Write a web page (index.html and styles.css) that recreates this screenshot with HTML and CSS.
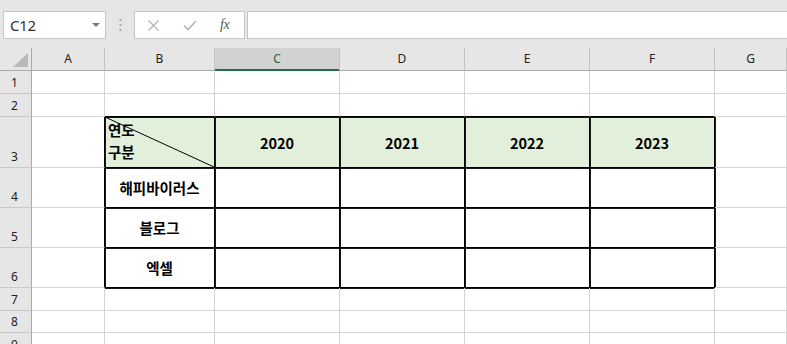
FILE: index.html
```html
<!DOCTYPE html>
<html lang="ko">
<head>
<meta charset="utf-8">
<title>Excel</title>
<link rel="stylesheet" href="styles.css">
</head>
<body>
<div class="toolbar">
  <div class="namebox"><span>C12</span><svg class="caret" width="8" height="4" viewBox="0 0 8 4"><polygon points="0,0 8,0 4,4" fill="#7a7a7a"/></svg></div>
  <div class="grip"><svg width="3" height="12" viewBox="0 0 3 12"><rect x="0.5" y="0" width="2" height="2" fill="#a9a9a9"/><rect x="0.5" y="5" width="2" height="2" fill="#a9a9a9"/><rect x="0.5" y="10" width="2" height="2" fill="#a9a9a9"/></svg></div>
  <div class="fbtns">
    <svg class="ico-x" width="11" height="11" viewBox="0 0 11 11"><path d="M0.5 0.5 L10.5 10.5 M10.5 0.5 L0.5 10.5" stroke="#b3b3b3" stroke-width="1.3" fill="none"/></svg>
    <svg class="ico-ok" width="14" height="11" viewBox="0 0 14 11"><path d="M1 5.5 L5 9.5 L13 1" stroke="#b3b3b3" stroke-width="1.6" fill="none"/></svg>
    <span class="fx">fx</span>
  </div>
  <div class="fbar"></div>
</div>
<div class="sheet">
  <div class="hd corner"><svg width="15" height="14" viewBox="0 0 15 14"><polygon points="0,14 15,14 15,0" fill="#b9b9b9"/></svg></div>
  <div class="hd">A</div><div class="hd">B</div><div class="hd sel">C</div><div class="hd">D</div><div class="hd">E</div><div class="hd">F</div><div class="hd">G</div>

  <div class="rh">1</div><div class="c"></div><div class="c"></div><div class="c"></div><div class="c"></div><div class="c"></div><div class="c"></div><div class="c"></div>

  <div class="rh">2</div><div class="c"></div><div class="c bb"></div><div class="c bb"></div><div class="c bb"></div><div class="c bb"></div><div class="c bb"></div><div class="c"></div>

  <div class="rh">3</div><div class="c br"></div>
  <div class="c bx green corner-cell"><svg class="diag" viewBox="0 0 100 100" preserveAspectRatio="none"><line x1="0" y1="0" x2="100" y2="100" stroke="#000" stroke-width="1" vector-effect="non-scaling-stroke"/></svg><span>연도</span><span>구분</span></div>
  <div class="c bx green k">2020</div><div class="c bx green k">2021</div><div class="c bx green k">2022</div><div class="c bx green k">2023</div><div class="c il"></div>

  <div class="rh">4</div><div class="c br"></div><div class="c bx k">해피바이러스</div><div class="c bx"></div><div class="c bx"></div><div class="c bx"></div><div class="c bx"></div><div class="c il"></div>

  <div class="rh">5</div><div class="c br"></div><div class="c bx k">블로그</div><div class="c bx"></div><div class="c bx"></div><div class="c bx"></div><div class="c bx"></div><div class="c il"></div>

  <div class="rh">6</div><div class="c br"></div><div class="c bx k">엑셀</div><div class="c bx"></div><div class="c bx"></div><div class="c bx"></div><div class="c bx"></div><div class="c il"></div>

  <div class="rh">7</div><div class="c"></div><div class="c it"></div><div class="c it"></div><div class="c it"></div><div class="c it"></div><div class="c it"></div><div class="c"></div>

  <div class="rh">8</div><div class="c"></div><div class="c"></div><div class="c"></div><div class="c"></div><div class="c"></div><div class="c"></div><div class="c"></div>

  <div class="rh">9</div><div class="c"></div><div class="c"></div><div class="c"></div><div class="c"></div><div class="c"></div><div class="c"></div><div class="c"></div>
</div>
</body>
</html>
```

FILE: styles.css
```css
html, body {
  margin: 0;
  padding: 0;
}
body {
  width: 787px;
  height: 344px;
  overflow: hidden;
  background: #fff;
  font-family: "Noto Sans", "Liberation Sans", sans-serif;
}

/* ---------- formula toolbar ---------- */
.toolbar {
  display: flex;
  align-items: flex-start;
  height: 48px;
  box-sizing: border-box;
  padding: 11px 0 0 3px;
  background: #e6e6e6;
  overflow: hidden;
}
.namebox {
  width: 103px;
  height: 28px;
  box-sizing: border-box;
  border: 1px solid #c6c6c6;
  background: #fff;
  display: flex;
  align-items: center;
  justify-content: space-between;
  padding: 0 5px 0 6px;
  font-size: 15px;
  color: #333;
}
.namebox span {
  letter-spacing: -0.3px;
}
.grip {
  width: 28px;
  height: 28px;
  display: flex;
  align-items: center;
  justify-content: center;
}
.fbtns {
  width: 111px;
  height: 28px;
  box-sizing: border-box;
  border: 1px solid #c6c6c6;
  background: #fff;
  display: flex;
  align-items: center;
  padding-left: 13px;
}
.ico-x {
  margin-right: 24px;
}
.ico-ok {
  margin-right: 23px;
}
.fx {
  font-family: "Liberation Serif", serif;
  font-style: italic;
  font-size: 14px;
  color: #555;
  letter-spacing: -0.5px;
}
.fbar {
  flex: 1;
  height: 28px;
  box-sizing: border-box;
  margin-left: 2px;
  margin-right: -4px;
  border: 1px solid #c6c6c6;
  background: #fff;
}

/* ---------- sheet grid ---------- */
.sheet {
  display: grid;
  grid-template-columns: 32px 73px 110px 125px 125px 125px 125px 72px;
  grid-template-rows: 23px 23px 23px 51px 40px 40px 40px 23px 22px 23px;
}
.sheet > div {
  box-sizing: border-box;
  position: relative;
}
.hd {
  background: #e6e6e6;
  border-right: 1px solid #c3c3c3;
  border-bottom: 1px solid #a9a9a9;
  display: flex;
  align-items: center;
  justify-content: center;
  font-size: 12px;
  color: #222;
  padding-bottom: 1px;
}
.hd.sel {
  background: #d2d2d2;
  color: #2d5d41;
  border-bottom-color: #217346;
  box-shadow: inset 0 -1px 0 #217346;
}
.hd.corner {
  border-right-color: #a9a9a9;
  align-items: flex-end;
  justify-content: flex-end;
  padding: 0 3px 3px 0;
}
.hd.corner svg {
  display: block;
}
.rh {
  background: #e6e6e6;
  border-right: 1px solid #a9a9a9;
  border-bottom: 1px solid #c8c8c8;
  display: flex;
  align-items: flex-end;
  justify-content: center;
  font-size: 12px;
  color: #222;
  padding: 0 2px 3px 0;
  line-height: 14px;
}
.c {
  border-right: 1px solid #d4d4d4;
  border-bottom: 1px solid #d4d4d4;
}

/* black table borders (grid line + 1px inside) */
.bx {
  border-right-color: #000 !important;
  border-bottom-color: #000 !important;
  box-shadow: inset 1px 1px 0 #1a1a1a;
}
.br {
  border-right-color: #000;
}
.bb {
  border-bottom-color: #000;
}
.il {
  box-shadow: inset 1px 0 0 #1a1a1a;
}
.it {
  box-shadow: inset 0 1px 0 #1a1a1a;
}
.green {
  background: #e2efda;
}
.k {
  display: flex;
  align-items: center;
  justify-content: center;
  font-family: "Noto Sans CJK KR", "Noto Sans", sans-serif;
  font-weight: 700;
  font-size: 14.5px;
  color: #000;
}
.corner-cell {
  display: flex;
  flex-direction: column;
  justify-content: flex-end;
  padding: 0 0 4px 3px;
  font-family: "Noto Sans CJK KR", sans-serif;
  font-weight: 700;
  font-size: 14.5px;
  line-height: 22px;
  color: #000;
}
.corner-cell span {
  position: relative;
}
.diag {
  position: absolute;
  left: 0;
  top: 0;
  width: 100%;
  height: 100%;
}
```
